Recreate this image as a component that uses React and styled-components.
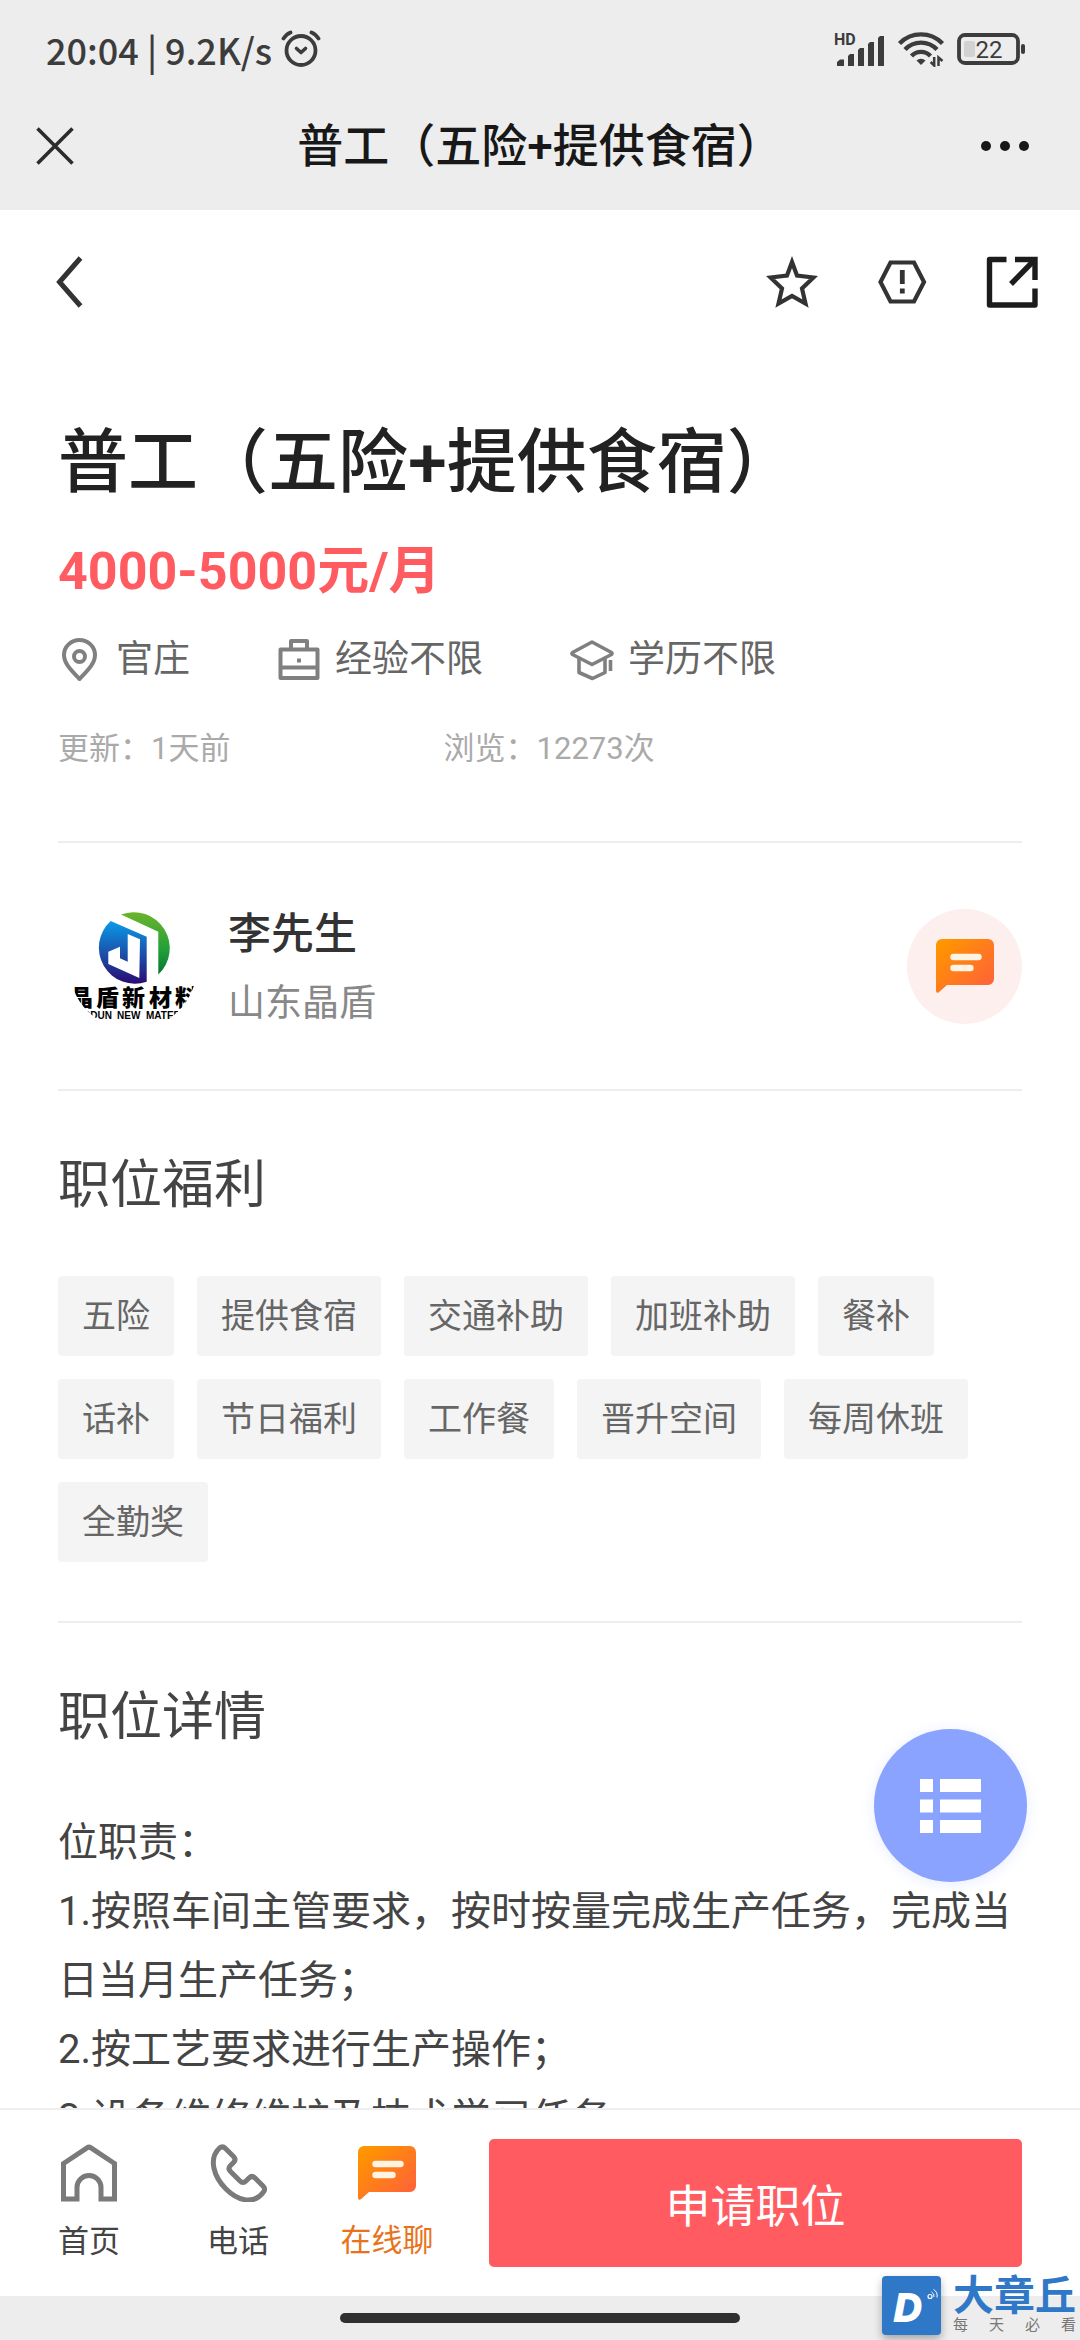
import styled, { createGlobalStyle } from 'styled-components'

const colors = {
  bar: '#ededed',
  ink: '#222222',
  text: '#444444',
  icon: '#333333',
  muted: '#888888',
  light: '#aaaaaa',
  line: '#eeeeee',
  red: '#ff5b60',
  orange: '#e8731c',
  blue: '#8aa3ff',
  brand: '#2f78c8',
}

const GlobalStyle = createGlobalStyle`
* {
  box-sizing: border-box;
}
body {
  margin: 0;
  background: #ffffff;
  color: ${colors.text};
  font-family: Roboto, "Noto Sans CJK SC", sans-serif;
}
h1, h2, p, ul {
  margin: 0;
  padding: 0;
  font-weight: 400;
}
button {
  padding: 0;
  border: 0;
  background: none;
  color: inherit;
  font: inherit;
  cursor: pointer;
}
svg {
  display: block;
  flex: none;
}
`

const Screen = styled.div`
position: relative;
display: flex;
flex-direction: column;
height: 100vh;
`

const StatusBar = styled.div`
display: flex;
align-items: center;
justify-content: space-between;
height: 82px;
padding: 15px 54px 0 46px;
background: ${colors.bar};
color: #3c3c3c;
font-family: "Noto Sans CJK SC", sans-serif;
font-size: 36px;
font-weight: 500;
line-height: 48px;
`

const StatusGroup = styled.div`
display: flex;
align-items: center;
gap: ${(props) => props.$gap}px;
`

const TitleBar = styled.header`
display: grid;
grid-template-columns: 64px 1fr 64px;
align-items: center;
height: 128px;
padding: 0 36px;
background: ${colors.bar};
`

const BarTitle = styled.p`
color: #181818;
font-size: 46px;
font-weight: 500;
line-height: 60px;
text-align: center;
white-space: nowrap;
`

const BarButton = styled.button`
justify-self: start;
`

const Scroller = styled.main`
flex: 1;
min-height: 0;
overflow-y: auto;
scrollbar-width: none;
`

const Toolbar = styled.div`
display: flex;
align-items: center;
justify-content: space-between;
height: 144px;
padding: 0 42px 0 56px;
`

const Actions = styled.div`
display: flex;
gap: 58px;
`

const Summary = styled.section`
margin: 0 58px;
padding: 62px 0 72px;
`

const JobTitle = styled.h1`
color: ${colors.ink};
font-size: 70px;
font-weight: 500;
line-height: 94px;
`

const Salary = styled.p`
margin-top: 30px;
color: ${colors.red};
font-size: 52px;
font-weight: 700;
line-height: 64px;
`

const Conditions = styled.ul`
display: flex;
gap: 87px;
margin-top: 32px;
list-style: none;
`

const Condition = styled.li`
display: flex;
align-items: center;
gap: 14px;
color: #666666;
font-size: 37px;
line-height: 48px;
`

const Stats = styled.div`
display: flex;
margin-top: 45px;
color: ${colors.light};
font-size: 31px;
line-height: 40px;
`

const Stat = styled.p`
flex: 0 0 40%;
`

const Contact = styled.section`
display: flex;
align-items: center;
margin: 0 58px;
height: 248px;
border-top: 2px solid ${colors.line};
`

const ContactText = styled.div`
flex: 1;
margin-left: 20px;
padding-top: 6px;
`

const ContactName = styled.p`
color: ${colors.icon};
font-size: 43px;
font-weight: 500;
line-height: 69px;
`

const Company = styled.p`
color: ${colors.muted};
font-size: 37px;
line-height: 69px;
`

const ChatButton = styled.button`
display: flex;
align-items: center;
justify-content: center;
width: 115px;
height: 115px;
border-radius: 50%;
background: #fcefee;
`

const Section = styled.section`
margin: 0 58px;
padding: 60px 0 59px;
border-top: 2px solid ${colors.line};
`

const SectionTitle = styled.h2`
margin-bottom: 55px;
font-size: 52px;
line-height: 70px;
`

const Tags = styled.ul`
display: flex;
flex-wrap: wrap;
gap: 23px;
list-style: none;
`

const Tag = styled.li`
padding: 1px 24px 0;
border-radius: 4px;
background: #f4f4f4;
color: #666666;
font-size: 34px;
line-height: 79px;
`

const Detail = styled.p`
font-size: 40px;
line-height: 69px;
`

const BottomBar = styled.nav`
display: flex;
align-items: center;
gap: 55px;
height: 188px;
padding: 0 58px 0 42px;
border-top: 2px solid ${colors.line};
background: #ffffff;
`

const NavLink = styled.a`
display: flex;
flex-direction: column;
align-items: center;
gap: 20px;
flex: 0 0 94px;
color: ${(props) => (props.$active ? colors.orange : colors.text)};
font-size: 31px;
line-height: 40px;
text-decoration: none;
white-space: nowrap;
`

const ApplyButton = styled.button`
flex: 1;
height: 128px;
border-radius: 5px;
background: ${colors.red};
color: #ffffff;
font-size: 45px;
`

const GestureArea = styled.div`
display: flex;
align-items: center;
justify-content: center;
height: 44px;
background: ${colors.bar};
`

const GestureBar = styled.div`
width: 37%;
height: 10px;
border-radius: 5px;
background: #303030;
`

const FloatingButton = styled.button`
position: absolute;
right: 53px;
bottom: 458px;
display: flex;
align-items: center;
justify-content: center;
width: 153px;
height: 153px;
border-radius: 50%;
background: ${colors.blue};
box-shadow: 0 2px 14px rgba(138, 163, 255, 0.2);
`

const Watermark = styled.div`
position: absolute;
right: 4px;
bottom: 5px;
display: flex;
align-items: center;
gap: 12px;
`

const WatermarkLogo = styled.div`
border-radius: 4px;
background: ${colors.brand};
box-shadow: 0 4px 8px rgba(0, 0, 0, 0.3);
`

const WatermarkName = styled.p`
color: ${colors.brand};
font-size: 41px;
font-weight: 700;
line-height: 38px;
`

const WatermarkSlogan = styled.p`
display: flex;
justify-content: space-between;
color: #777777;
font-size: 15px;
line-height: 20px;
`

const benefits = [
  '五险', '提供食宿', '交通补助', '加班补助', '餐补', '话补',
  '节日福利', '工作餐', '晋升空间', '每周休班', '全勤奖',
]

const duties = [
  '位职责：',
  '1.按照车间主管要求，按时按量完成生产任务，完成当日当月生产任务；',
  '2.按工艺要求进行生产操作；',
  '3.设备维修维护及技术学习任务。',
]

const AlarmIcon = () => (
  <svg width="40" height="38" viewBox="0 0 40 38" fill="none" stroke="#3c3c3c" strokeLinecap="round">
    <circle cx="20" cy="20.5" r="14.5" strokeWidth="3.8" />
    <path d="M2.500 8.500Q5.500 4 9.500 2.500M37.500 8.500Q34.500 4 30.500 2.500" strokeWidth="3.8" />
    <path d="M15.500 18.500l4.500 4l4.500-4" strokeWidth="3.6" strokeLinejoin="round" />
  </svg>
)

const SignalIcon = () => (
  <svg width="52" height="40" viewBox="0 0 52 40" fill="#3c3c3c">
    <text x="1" y="16" fontFamily="Roboto, sans-serif" fontSize="16" fontWeight="700">HD</text>
    <path d="M4 36v-3l3-2.500h4v6.500h-7zM15 36V27l2-2h4v12h-6zM25 36V21l2-2h4v18h-6zM35 36V15l2-2h4v24h-6zM45 36V9l2-2h4v30h-6z" />
  </svg>
)

const WifiIcon = () => (
  <svg width="48" height="36" viewBox="0 0 48 36" fill="none" stroke="#3c3c3c" strokeWidth="4.4">
    <path d="M2.500 12.500A30 30 0 0 1 45.500 12.500M8 18.500A22 22 0 0 1 40 18.500M14.500 25A13 13 0 0 1 33.500 25" />
    <path d="M19.500 29.500a6.500 6.500 0 0 1 9 0l-4.500 4.500z" fill="#3c3c3c" stroke="none" />
    <path d="M37.200 26v8.500l-3.500-3.500M41.500 35v-8.500l4 3.500" strokeWidth="2.500" />
  </svg>
)

const BatteryIcon = () => (
  <svg width="69" height="32" viewBox="0 0 69 32" fill="none">
    <rect x="2" y="2" width="59" height="28" rx="6" stroke="#3c3c3c" strokeWidth="3.800" />
    <rect x="7" y="8" width="11" height="16" rx="2" fill="#d2d2d2" />
    <rect x="64" y="11" width="4" height="10" rx="2" fill="#3c3c3c" />
    <text x="32" y="24.500" textAnchor="middle" fill="#3c3c3c" fontFamily="Roboto, sans-serif" fontSize="24" fontWeight="400">22</text>
  </svg>
)

const CloseIcon = () => (
  <svg width="38" height="38" viewBox="0 0 38 38" stroke="#2b2b2b" strokeWidth="3.600">
    <path d="M1.500 1.500l35 35M36.500 1.500l-35 35" />
  </svg>
)

const MoreIcon = () => (
  <svg width="50" height="12" viewBox="0 0 50 12" fill="#181818">
    <circle cx="6" cy="6" r="5" />
    <circle cx="25" cy="6" r="5" />
    <circle cx="44" cy="6" r="5" />
  </svg>
)

const BackIcon = () => (
  <svg width="28" height="52" viewBox="0 0 28 52" fill="none" stroke="#333333" strokeWidth="5">
    <path d="M24.500 2L3.500 26l21 24" />
  </svg>
)

const StarIcon = () => (
  <svg width="52" height="52" viewBox="0 0 52 52" fill="none" stroke="#333333" strokeWidth="4.200">
    <path d="M26 6L31 19.500L47.500 21.500L36 32.500L39.500 47.500L26 40L12.500 47.500L16 32.500L4.500 21.500L21 19.500Z" />
  </svg>
)

const ReportIcon = () => (
  <svg width="52" height="52" viewBox="0 0 52 52" fill="none" stroke="#333333" strokeWidth="4.200">
    <path d="M14.500 6.500h23.500l10 19.500l-10 19.500h-23.500l-10-19.500z" />
    <path d="M26.300 14v14M26.300 32.500v5" strokeWidth="4.800" />
  </svg>
)

const ShareIcon = () => (
  <svg width="52" height="52" viewBox="0 0 52 52" fill="none" stroke="#1c1c1c" strokeWidth="5.400" strokeLinejoin="round">
    <path d="M20.500 3.500H3.500v45.500H49V32.500" />
    <path d="M29 3.500H49V24" strokeLinejoin="miter" />
    <path d="M48.500 4L25 28" />
  </svg>
)

const PinIcon = () => (
  <svg width="44" height="44" viewBox="0 0 44 44" fill="none" stroke="#808080" strokeWidth="4">
    <path d="M21.500 41C12 31 6 25 6 17a15.500 15 0 0 1 31 0c0 8-6 14-15.500 24z" strokeLinejoin="round" />
    <circle cx="21.500" cy="18.500" r="5.500" />
  </svg>
)

const BriefcaseIcon = () => (
  <svg width="44" height="44" viewBox="0 0 44 44" fill="none" stroke="#808080" strokeWidth="4">
    <path d="M3.500 11.500h37v28.500h-37zM14 11V3h16v8M3.500 29.500h37" strokeLinejoin="round" />
    <path d="M20 22.500h4" />
  </svg>
)

const CapIcon = () => (
  <svg width="44" height="44" viewBox="0 0 44 44" fill="none" stroke="#808080" strokeWidth="3.600" strokeLinejoin="round">
    <path d="M22 4l19.500 10.500q1 1 0 2L22 26.500L2.500 16.500q-1-1 0-2z" />
    <path d="M9 20.500v14l13.500 6l12.500-6v-14M40.500 22v11" />
  </svg>
)

const ChatIcon = () => (
  <svg width="58" height="56" viewBox="0 0 58 56">
    <defs>
      <linearGradient id="chatFill" x1="0" y1="0" x2="1" y2="1">
        <stop offset="0.1" stopColor="#ff9500" />
        <stop offset="0.9" stopColor="#ff6338" />
      </linearGradient>
    </defs>
    <path d="M6 1h46a6 6 0 0 1 6 6v34a6 6 0 0 1-6 6H11l-8.500 7.500Q0 55.500 0 53V7a6 6 0 0 1 6-6z" fill="url(#chatFill)" />
    <path d="M17.500 19h25M17.500 30h17" stroke="#fff3e4" strokeWidth="6.400" strokeLinecap="round" />
  </svg>
)

const HomeIcon = () => (
  <svg width="58" height="58" viewBox="0 0 58 58" fill="none" stroke="#7a7a7a" strokeWidth="5" strokeLinejoin="miter">
    <path d="M3.500 19.500v35.500h13.500v-11.500a12 12 0 0 1 24 0v11.500h13.500v-35.500L31 3.800q-2-1.300-4 0z" />
  </svg>
)

const PhoneIcon = () => (
  <svg width="58" height="58" viewBox="0 0 58 58" fill="none" stroke="#7a7a7a" strokeWidth="5" strokeLinejoin="round">
    <path d="M10.500 4q3-2.500 6 0.500l8 8q3 3 0 6l-3 3q-3 3 0 6l9.500 9.500q3 3 6 0l3-3q3-3 6 0l8 8q3 3 0.500 6C45 61 29 57 17 45S-1 15 10.500 4z" />
  </svg>
)

const ListIcon = () => (
  <svg width="61" height="54" viewBox="0 0 61 54" fill="#ffffff">
    <path d="M0 0h13v13H0zM20 0h41v13H20zM0 20.500h13v13H0zM20 20.500h41v13H20zM0 41h13v13H0zM20 41h41v13H20z" />
  </svg>
)

const CompanyLogo = () => (
  <svg width="150" height="150" viewBox="0 0 150 150">
    <defs>
      <clipPath id="avatarClip">
        <circle cx="75" cy="75" r="64" />
      </clipPath>
      <linearGradient id="logoBlue" x1="0" y1="0" x2="0" y2="1">
        <stop offset="0" stopColor="#0a9be8" />
        <stop offset="1" stopColor="#2a0c72" />
      </linearGradient>
      <linearGradient id="logoGreen" x1="0" y1="0" x2="0" y2="1">
        <stop offset="0" stopColor="#6db42c" />
        <stop offset="0.6" stopColor="#21a038" />
        <stop offset="1" stopColor="#087534" />
      </linearGradient>
    </defs>
    <path d="M63 23.500A36 36 0 0 1 100.300 83.500V40.700Z" fill="url(#logoGreen)" />
    <path d="M52.700 30L88.700 45.700V90.700A36 36 0 0 1 52.700 30Z" fill="url(#logoBlue)" />
    <path d="M69.700 43L82 48.300L81.300 87L50.300 73V60.700L62 55.700V67.300L69.700 70.700Z" fill="#ffffff" />
    <g clipPath="url(#avatarClip)" fill="#000000">
      <text x="12 38 64 91 117" y="115" fontFamily="Noto Sans CJK SC, sans-serif" fontSize="23" fontWeight="900">晶盾新材料</text>
      <g fontFamily="Liberation Sans, sans-serif" fontSize="10" fontWeight="700">
        <text x="54" y="128" textAnchor="end">JINGDUN</text>
        <text x="59" y="128">NEW</text>
        <text x="88" y="128">MATERIAL</text>
      </g>
    </g>
  </svg>
)

const WatermarkIcon = () => (
  <svg width="59" height="59" viewBox="0 0 59 59" fill="#ffffff">
    <text x="12" y="45" fontFamily="Liberation Sans, sans-serif" fontSize="38" fontWeight="700" fontStyle="italic" stroke="#ffffff" strokeWidth="2">D</text>
    <circle cx="48" cy="20.500" r="2" fill="none" stroke="#ffffff" strokeWidth="1.200" />
    <path d="M49.500 16q3 1.500 2.500 5M51.500 13.500q4.500 2.500 3.500 8" fill="none" stroke="#ffffff" strokeWidth="1" />
  </svg>
)

function App() {
  return (
    <>
      <GlobalStyle />
      <Screen>
        <StatusBar>
          <StatusGroup $gap={9}>
            <span>20:04 | 9.2K/s</span>
            <AlarmIcon />
          </StatusGroup>
          <StatusGroup $gap={12}>
            <SignalIcon />
            <WifiIcon />
            <BatteryIcon />
          </StatusGroup>
        </StatusBar>
        <TitleBar>
          <BarButton aria-label="关闭"><CloseIcon /></BarButton>
          <BarTitle>普工（五险+提供食宿）</BarTitle>
          <BarButton aria-label="更多"><MoreIcon /></BarButton>
        </TitleBar>
        <Scroller>
          <Toolbar>
            <button aria-label="返回"><BackIcon /></button>
            <Actions>
              <button aria-label="收藏"><StarIcon /></button>
              <button aria-label="举报"><ReportIcon /></button>
              <button aria-label="分享"><ShareIcon /></button>
            </Actions>
          </Toolbar>
          <Summary>
            <JobTitle>普工（五险+提供食宿）</JobTitle>
            <Salary>4000-5000元/月</Salary>
            <Conditions>
              <Condition><PinIcon />官庄</Condition>
              <Condition><BriefcaseIcon />经验不限</Condition>
              <Condition><CapIcon />学历不限</Condition>
            </Conditions>
            <Stats>
              <Stat>更新：1天前</Stat>
              <Stat>浏览：12273次</Stat>
            </Stats>
          </Summary>
          <Contact>
            <CompanyLogo />
            <ContactText>
              <ContactName>李先生</ContactName>
              <Company>山东晶盾</Company>
            </ContactText>
            <ChatButton aria-label="聊天"><ChatIcon /></ChatButton>
          </Contact>
          <Section>
            <SectionTitle>职位福利</SectionTitle>
            <Tags>
              {benefits.map((benefit) => (
                <Tag key={benefit}>{benefit}</Tag>
              ))}
            </Tags>
          </Section>
          <Section>
            <SectionTitle>职位详情</SectionTitle>
            {duties.map((duty) => (
              <Detail key={duty}>{duty}</Detail>
            ))}
          </Section>
        </Scroller>
        <BottomBar>
          <NavLink href="#home"><HomeIcon />首页</NavLink>
          <NavLink href="#phone"><PhoneIcon />电话</NavLink>
          <NavLink href="#chat" $active><ChatIcon />在线聊</NavLink>
          <ApplyButton>申请职位</ApplyButton>
        </BottomBar>
        <GestureArea>
          <GestureBar />
        </GestureArea>
        <FloatingButton aria-label="目录"><ListIcon /></FloatingButton>
        <Watermark>
          <WatermarkLogo><WatermarkIcon /></WatermarkLogo>
          <div>
            <WatermarkName>大章丘</WatermarkName>
            <WatermarkSlogan>
              <span>每</span>
              <span>天</span>
              <span>必</span>
              <span>看</span>
            </WatermarkSlogan>
          </div>
        </Watermark>
      </Screen>
    </>
  )
}

export default App
